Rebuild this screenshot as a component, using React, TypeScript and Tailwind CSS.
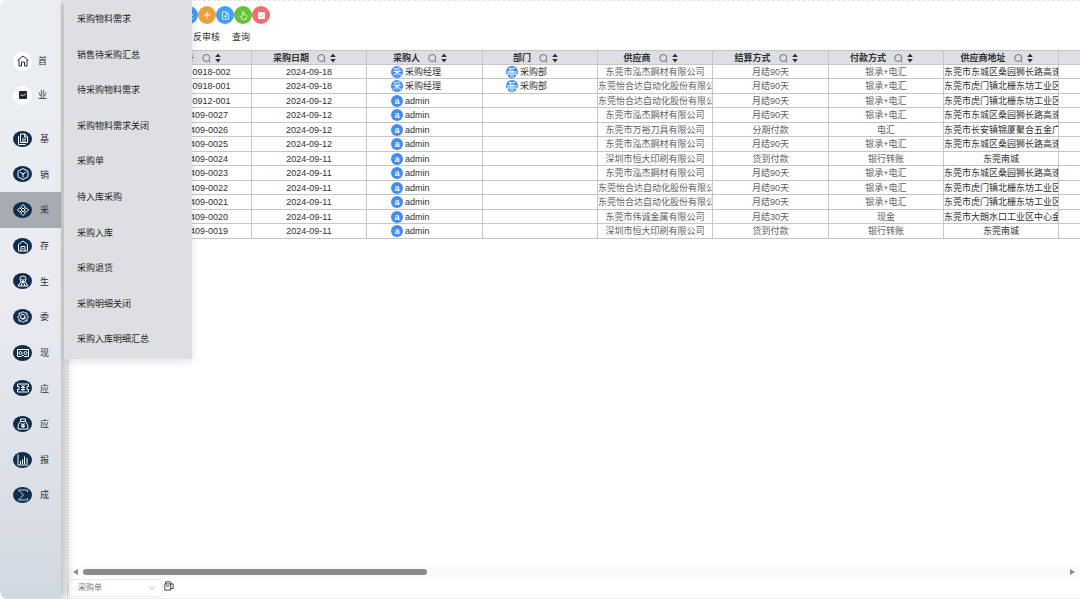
import React from 'react'
import { ChevronDown, Plus, Search } from 'lucide-react'

type IconProps = { children: React.ReactNode; className?: string }

const Glyph = ({ children, className = 'size-[12px]' }: IconProps) => (
  <svg
    viewBox="0 0 24 24"
    className={className}
    fill="none"
    stroke="currentColor"
    strokeWidth={2}
    strokeLinejoin="round"
    aria-hidden="true"
  >
    {children}
  </svg>
)

const modules = [
  {
    label: '基',
    icon: (
      <>
        <path d="M7 2h9l5 5v12H7z" />
        <path d="M15 2v6h6M10 12h8M10 16h8M3 6v17h14" />
      </>
    ),
  },
  {
    label: '销',
    icon: (
      <>
        <path d="M12 1l10 5.500v11L12 23 2 17.500v-11z" />
        <path d="M6 8l6 4 6-4M12 12v7" />
      </>
    ),
  },
  {
    label: '采',
    icon: (
      <path d="M12 1l4.500 4.500L12 10 7.500 5.500zM12 14l4.500 4.500L12 23l-4.500-4.500zM5.500 7.500L10 12l-4.500 4.500L1 12zM18.500 7.500L23 12l-4.500 4.500L14 12z" />
    ),
  },
  {
    label: '存',
    icon: (
      <>
        <path d="M3 9l9-7 9 7v13H3z" />
        <path d="M8 22v-9h8v9M12 16v3" />
      </>
    ),
  },
  {
    label: '生',
    icon: (
      <>
        <circle cx="12" cy="8" r="6" />
        <path d="M8 13L2 22h20l-6-9M9 8l3 3 3-3M12 11l-4 11M12 11l4 11" />
      </>
    ),
  },
  {
    label: '委',
    icon: (
      <>
        <path d="M12 1l3 3h5v5l3 3-3 3v5h-5l-3 3-3-3H4v-5l-3-3 3-3V4h5z" />
        <path d="M14 7a5 5 0 1 0 3 5M9 15h5l2-7" />
      </>
    ),
  },
  {
    label: '现',
    icon: (
      <>
        <path d="M1 5h22v14h-8l-3-3-3 3H1z" />
        <circle cx="7" cy="12" r="3" />
        <circle cx="17" cy="12" r="3" />
      </>
    ),
  },
  {
    label: '应',
    icon: (
      <>
        <path d="M1 4h22v5h-3v6h3v5H1v-5h3V9H1z" />
        <path d="M9 6l3 4 3-4M8 11h8M8 15h8M12 10v8" />
      </>
    ),
  },
  {
    label: '应',
    icon: (
      <>
        <path d="M7 2h10v5H7zM7 7c-4 4-5 8-5 15h20c0-7-1-11-5-15" />
        <path d="M9 10l3 4 3-4M8 14h8M8 17h8M12 13v7" />
      </>
    ),
  },
  {
    label: '报',
    icon: <path d="M2 1v21h21M7 20v-6M11 20V11M15 20V5M20 20V8" />,
  },
  {
    label: '成',
    icon: <path d="M21 6V2H3l10 10L3 22h18v-4" strokeWidth={1.5} />,
  },
]

const submenu = [
  '采购物料需求',
  '销售待采购汇总',
  '待采购物料需求',
  '采购物料需求关闭',
  '采购单',
  '待入库采购',
  '采购入库',
  '采购退货',
  '采购明细关闭',
  '采购入库明细汇总',
]

const columns = ['采购单号', '采购日期', '采购人', '部门', '供应商', '结算方式', '付款方式', '供应商地址']

const HJ = '东莞市泓杰鋼材有限公司'
const YHD = '东莞怡合达自动化股份有限公'
const HD = '深圳市恒大印刷有限公司'
const DONGCHENG = '东莞市东城区桑园狮长路高速'
const HUMEN = '东莞市虎门镇北栅东坊工业区'

// 单号, 日期, 采购人, 部门, 供应商, 结算方式, 付款方式, 地址
const orders = [
  ['PO2024-0918-002', '2024-09-18', '采购经理', '采购部', HJ, '月结90天', '银承+电汇', DONGCHENG],
  ['PO2024-0918-001', '2024-09-18', '采购经理', '采购部', YHD, '月结90天', '银承+电汇', HUMEN],
  ['PO2024-0912-001', '2024-09-12', 'admin', '', YHD, '月结90天', '银承+电汇', HUMEN],
  ['PO-202409-0027', '2024-09-12', 'admin', '', HJ, '月结90天', '银承+电汇', DONGCHENG],
  ['PO-202409-0026', '2024-09-12', 'admin', '', '东莞市万裕刀具有限公司', '分期付款', '电汇', '东莞市长安镇锦厦聚合五金广'],
  ['PO-202409-0025', '2024-09-12', 'admin', '', HJ, '月结90天', '银承+电汇', DONGCHENG],
  ['PO-202409-0024', '2024-09-11', 'admin', '', HD, '货到付款', '银行转账', '东莞南城'],
  ['PO-202409-0023', '2024-09-11', 'admin', '', HJ, '月结90天', '银承+电汇', DONGCHENG],
  ['PO-202409-0022', '2024-09-11', 'admin', '', YHD, '月结90天', '银承+电汇', HUMEN],
  ['PO-202409-0021', '2024-09-11', 'admin', '', YHD, '月结90天', '银承+电汇', HUMEN],
  ['PO-202409-0020', '2024-09-11', 'admin', '', '东莞市伟诚金属有限公司', '月结30天', '现金', '东莞市大朗水口工业区中心金'],
  ['PO-202409-0019', '2024-09-11', 'admin', '', HD, '货到付款', '银行转账', '东莞南城'],
]

const head = 'h-[15px] border-t border-r border-b border-[#c6c6c6] p-0 leading-[12px] last:border-r-0'
const cell = 'h-[14px] overflow-hidden whitespace-nowrap border-r border-b border-[#c6c6c6] p-0 leading-[12px] last:border-r-0'

const Sidebar = () => (
  <aside className="relative z-10 flex w-[61px] shrink-0 flex-col rounded-l-lg bg-linear-to-b from-[#eaeef3] via-[#e9ebf0] to-[#d2d8e2] pt-[44px] shadow-[5px_0_10px_rgba(0,0,0,0.25)]">
    <a href="#home" className="flex h-[34px] items-center gap-[6px] pl-[13px]">
      <span className="flex size-[19px] items-center justify-center rounded-full bg-white text-[#222b38]">
        <Glyph>
          <path d="M1 11L12 2l11 9M4 10v12h5v-8h6v8h5V10" />
        </Glyph>
      </span>
      <span className="pt-[2px]">首</span>
    </a>
    <a href="#business" className="flex h-[34px] items-center gap-[6px] pl-[13px]">
      <span className="flex size-[19px] items-center justify-center rounded-full bg-white">
        <svg viewBox="0 0 8 8" className="size-[8px]" aria-hidden="true">
          <rect width="8" height="8" rx="1" fill="#222831" />
          <path d="M1.500 5l1.500-1.500L4.500 5l2-2.500" fill="none" stroke="#fff" strokeWidth="0.8" />
        </svg>
      </span>
      <span className="pt-[2px]">业</span>
    </a>
    <nav className="mt-[9px] grid h-[392px] auto-rows-fr">
      {modules.map((m, i) => (
        <a
          key={i}
          href={`#module-${i}`}
          className={`flex items-center gap-[8px] pl-[13px] ${m.label === '采' ? 'bg-[#a7acb3]' : ''}`}
        >
          <span className="flex h-[16px] w-[19px] items-center justify-center rounded-[50%] bg-[#0f2d4d] text-white">
            <Glyph>{m.icon}</Glyph>
          </span>
          <span className="pt-[2px]">{m.label}</span>
        </a>
      ))}
    </nav>
  </aside>
)

const Toolbar = () => (
  <div className="h-[50px] border-t border-dashed border-[#e2e4e8] pt-[5px]">
    <div className="flex pl-[112px] text-white">
      <button aria-label="搜索" className="flex size-[18px] items-center justify-center rounded-full bg-[#409eff]">
        <Search className="size-[9px]" />
      </button>
      <button aria-label="新增" className="flex size-[18px] items-center justify-center rounded-full bg-[#e6a23c]">
        <Plus className="size-[10px]" />
      </button>
      <button aria-label="单据" className="flex size-[18px] items-center justify-center rounded-full bg-[#409eff]">
        <Glyph className="size-[9px]">
          <path d="M4 2h10l6 6v14H4zM14 2v6h6M8 14h8M12 10v8" />
        </Glyph>
      </button>
      <button aria-label="审核" className="flex size-[18px] items-center justify-center rounded-full bg-[#67c23a]">
        <Glyph className="size-[9px]">
          <path d="M9 14V4a2 2 0 0 1 4 0v6l6 1c2 0 2 2 2 3l-2 8H9l-6-7c1-2 3-2 6 1" />
        </Glyph>
      </button>
      <button aria-label="关闭" className="flex size-[18px] items-center justify-center rounded-full bg-[#f56c6c]">
        <svg viewBox="0 0 8 8" className="size-[7px]" aria-hidden="true">
          <rect width="8" height="8" rx="1" fill="#fff" />
          <path d="M2 4l1.500 1.500L6 3" fill="none" stroke="#f56c6c" strokeWidth="0.8" />
        </svg>
      </button>
    </div>
    <div className="flex gap-[12px] pt-[7px] pl-[125px] leading-[12px]">
      <button>反审核</button>
      <button>查询</button>
    </div>
  </div>
)

const Avatar = ({ children }: { children: React.ReactNode }) => (
  <span className="flex size-[12px] shrink-0 items-center justify-center overflow-hidden rounded-full bg-[#3f8cff] text-[9px] text-white">
    {children}
  </span>
)

const OrderTable = () => (
  <table className="w-full table-fixed border-separate border-spacing-0 text-center">
    <colgroup>
      <col className="w-[68px]" />
      <col className="w-[116px]" />
      <col className="w-[115px]" />
      <col className="w-[116px]" />
      <col className="w-[115px]" />
      <col className="w-[115px]" />
      <col className="w-[116px]" />
      <col className="w-[115px]" />
      <col className="w-[115px]" />
      <col />
    </colgroup>
    <thead className="bg-[#dddfe3] text-[#303133]">
      <tr>
        <th className={head} />
        {columns.map((c) => (
          <th key={c} className={head}>
            <div className="flex items-center justify-center pt-px pr-[9px]">
              {c}
              <svg
                viewBox="0 0 18 18"
                className="ml-[8px] size-[9px]"
                fill="none"
                stroke="#55585e"
                strokeWidth={1.6}
                aria-hidden="true"
              >
                <circle cx="8.500" cy="8" r="7" />
                <path d="M13.500 13l3 4" />
              </svg>
              <svg viewBox="0 0 6 10" className="ml-[4px] h-[10px] w-[6px]" fill="#303133" aria-hidden="true">
                <path d="M3 0.500L5.800 4H0.200zM3 9.500L0.200 6h5.600z" />
              </svg>
            </div>
          </th>
        ))}
        <th className={head} />
      </tr>
    </thead>
    <tbody className="text-[#303133]">
      {orders.map(([no, date, buyer, dept, supplier, settle, pay, address]) => (
        <tr key={no} className="h-[14px] even:h-[15px]">
          <td className={cell} />
          <td className={cell}>{no}</td>
          <td className={cell}>{date}</td>
          <td className={cell}>
            <div className="flex items-center gap-[2px] pl-[24px]">
              <Avatar>{buyer === 'admin' ? <b>a</b> : '采'}</Avatar>
              {buyer}
            </div>
          </td>
          <td className={cell}>
            {dept && (
              <div className="flex items-center gap-[2px] pl-[23px]">
                <Avatar>
                  <Glyph className="size-[12px]">
                    <path d="M6 5h12M8 5v5h8M2 12h20M12 10v6M3 22v-6h7v6M14 22v-6h7v6" />
                  </Glyph>
                </Avatar>
                {dept}
              </div>
            )}
          </td>
          <td className={`${cell} text-[#606266]`}>{supplier}</td>
          <td className={`${cell} text-[#606266]`}>{settle}</td>
          <td className={`${cell} text-[#606266]`}>{pay}</td>
          <td className={cell}>{address}</td>
          <td className={cell} />
        </tr>
      ))}
    </tbody>
  </table>
)

const Footer = () => (
  <footer className="mt-auto">
    {/* horizontal scrollbar */}
    <div className="flex h-[10px] items-center gap-[5px] bg-[#fafafa] px-[5px]">
      <svg viewBox="0 0 5 6" className="h-[6px] w-[5px]" fill="#8b8b8b" aria-hidden="true">
        <path d="M5 0v6L0 3z" />
      </svg>
      <div className="flex-1">
        <div className="h-[6px] w-[35%] rounded-full bg-[#8b8b8b]" />
      </div>
      <svg viewBox="0 0 5 6" className="h-[6px] w-[5px]" fill="#8b8b8b" aria-hidden="true">
        <path d="M0 0v6l5-3z" />
      </svg>
    </div>
    <div className="flex items-start border-b border-[#eeeeee] pt-[2px] pb-px">
      <div className="relative">
        <select
          aria-label="单据类型"
          className="block h-[18px] w-[95px] appearance-none rounded-sm border border-[#e8eaef] bg-white pl-[9px] text-[8px] text-[#777a80]"
        >
          <option>采购单</option>
        </select>
        <ChevronDown
          className="pointer-events-none absolute top-[3px] right-[5px] size-[12px] text-[#a4a7ad]"
          strokeWidth={1.5}
        />
      </div>
      <button aria-label="打印" className="mt-[2px] ml-px">
        <Glyph className="size-[10px] text-[#222222]">
          <path d="M4 7V2h11l3 4M2 7h14v15H2zM16 7h6v11h-6M5 12h8" />
        </Glyph>
      </button>
    </div>
  </footer>
)

const App = () => {
  return (
    <div className="relative flex min-h-screen bg-white font-['Liberation_Sans','Noto_Sans_CJK_SC',sans-serif] text-[9px] text-[#303133]">
      <Sidebar />

      <main className="ml-[6px] flex min-w-0 flex-1 flex-col border-l border-dotted border-[#c8c8c8]">
        <Toolbar />
        <OrderTable />
        <Footer />
      </main>

      {/* flyout of the active module */}
      <ul className="absolute top-0 left-[64px] z-20 grid h-[359px] w-[128px] auto-rows-fr bg-[#dddfe3] pt-px pb-[2px] shadow-[0_2px_8px_rgba(0,0,0,0.12)]">
        {submenu.map((s) => (
          <li key={s} className="flex items-center pt-[2px] pl-[13px] text-[#1f1f1f]">
            <a href="#submenu">{s}</a>
          </li>
        ))}
      </ul>
    </div>
  )
}

export default App
